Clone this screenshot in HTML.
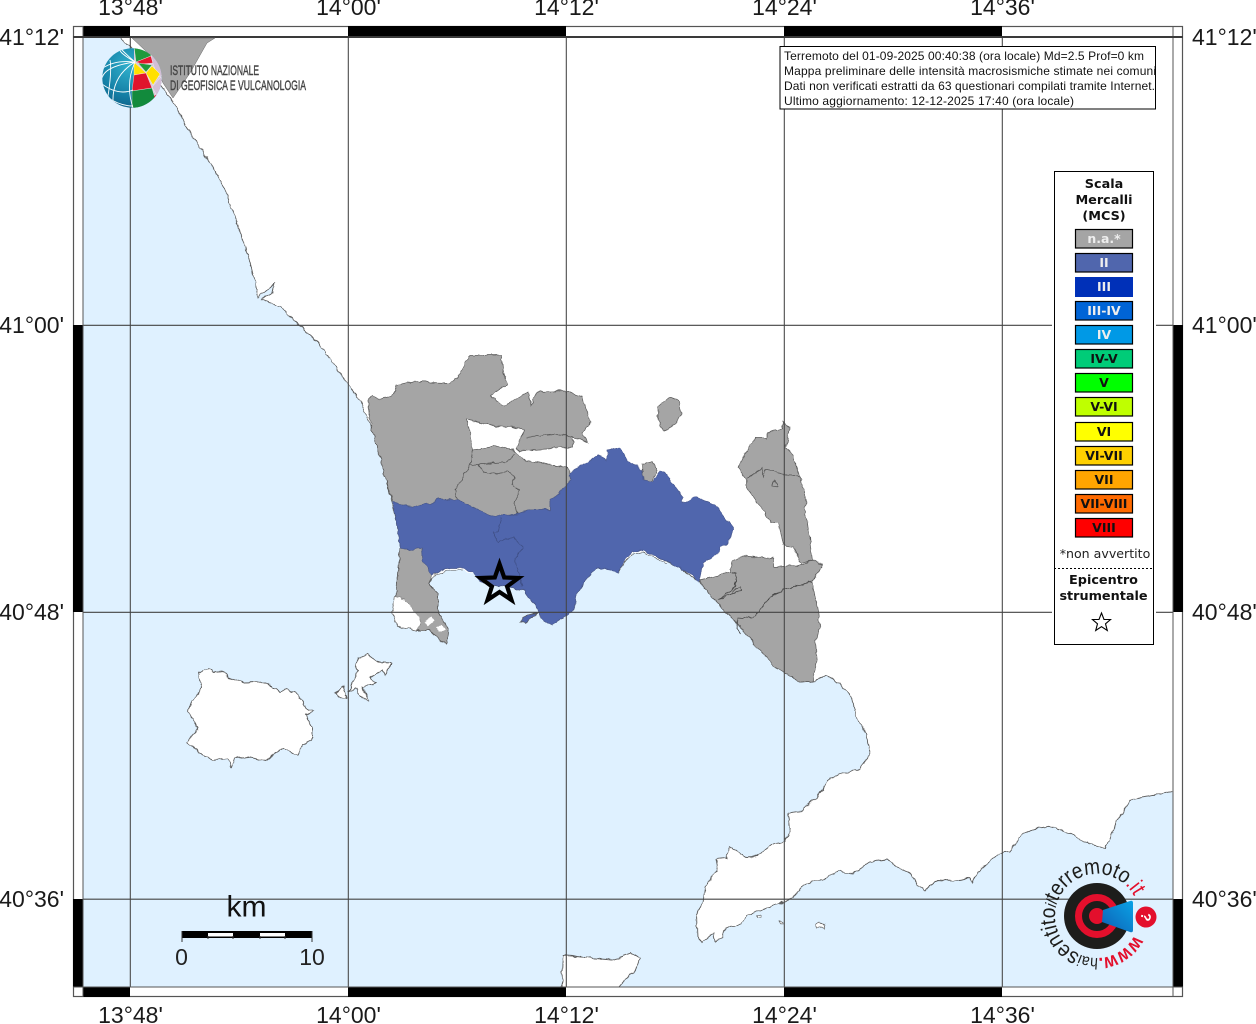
<!DOCTYPE html>
<html lang="it">
<head>
<meta charset="utf-8">
<title>Mappa intensità macrosismiche</title>
<style>
html,body{margin:0;padding:0;background:#fff;width:1256px;height:1024px;overflow:hidden}
svg{display:block}
.fr{font-family:"Liberation Sans",sans-serif;font-size:23px;fill:#1a1a1a}
.leg{font-family:"DejaVu Sans",sans-serif;font-weight:bold;font-size:12.5px;text-anchor:middle}
.tit{font-family:"DejaVu Sans",sans-serif;font-weight:bold;font-size:12.8px;text-anchor:middle;fill:#111}
.info{font-family:"Liberation Sans",sans-serif;font-size:12px;fill:#111}
</style>
</head>
<body>
<svg width="1256" height="1024" viewBox="0 0 1256 1024" xmlns="http://www.w3.org/2000/svg">
<defs>
<clipPath id="mapc"><rect x="83" y="37" width="1090" height="950"/></clipPath>
<clipPath id="infoc"><rect x="780" y="46" width="375.5" height="63"/></clipPath>
<clipPath id="gl"><circle cx="132" cy="78" r="29.7"/></clipPath>
<radialGradient id="gb" cx="0.45" cy="0.3" r="0.8"><stop offset="0" stop-color="#30b0cc"/><stop offset="0.6" stop-color="#1580a6"/><stop offset="1" stop-color="#0d5a82"/></radialGradient>
<linearGradient id="cone" x1="0" y1="1" x2="1" y2="0"><stop offset="0" stop-color="#0d5fb4"/><stop offset="1" stop-color="#0aa3e6"/></linearGradient>
<filter id="wig" filterUnits="userSpaceOnUse" x="60" y="20" width="1140" height="990" color-interpolation-filters="sRGB">
<feTurbulence type="fractalNoise" baseFrequency="0.14" numOctaves="2" seed="4" result="n"/>
<feDisplacementMap in="SourceGraphic" in2="n" scale="4.5" xChannelSelector="R" yChannelSelector="G"/>
</filter>
</defs>

<rect width="1256" height="1024" fill="#fff"/>

<g clip-path="url(#mapc)">
<g filter="url(#wig)">
<!-- sea -->
<path fill="#dff1ff" stroke="#5a5a5a" stroke-width="0.9" d="M70 25L110 25L120 37L150 70L165 90L175 105L188 130L200 148L212 165L225 190L238 225L250 262L256 287L258 297L270 288L274 284L272 293L262 299L280 307L300 325L320 345L345 380L360 400L372 430L385 475L392 502L397 523L400 548L397 590L395 597L392 613L397 627L418 630L430 630L440 640L447 645L448 630L443 620L438 613L438 593L428 583L437 572L450 568L463 568L473 573L480 582L493 585L513 588L523 590L528 597L535 603L540 617L552 625L567 615L573 610L577 593L587 578L597 568L607 568L618 572L627 560L633 552L643 550L667 562L680 568L700 582L717 603L737 623L773 665L800 682L813 681L827 675L840 685L852 697L855 714L866 733L870 755L858 770L838 775L827 780L818 797L808 803L803 811L787 813L790 830L785 841L772 845L758 856L747 857L730 847L726 858L716 859L718 870L705 887L703 902L697 915L698 937L702 943L713 933L715 941L723 938L725 928L742 923L747 916L783 902L793 897L805 884L823 879L840 871L852 874L870 862L887 860L912 875L917 885L925 890L937 880L953 881L970 878L973 882L977 873L1000 853L1010 852L1023 833L1030 830L1050 826L1068 832L1085 842L1106 848L1117 822L1130 800L1155 795L1190 788L1190 1000L70 1000Z"/>
<!-- Ischia -->
<path fill="#fff" stroke="#5a5a5a" stroke-width="0.9" d="M198 673L208 668L213 672L223 671L228 678L245 683L265 682L280 692L287 689L298 695L305 707L313 711L305 715L312 727L312 740L302 745L298 755L283 748L265 761L248 757L235 758L232 768L228 758L212 760L200 753L187 742L198 728L188 710L192 702L203 687L198 677Z"/>
<!-- Procida -->
<path fill="#fff" stroke="#5a5a5a" stroke-width="0.9" d="M335 693L343 686L347 698L339 697Z"/>
<path fill="#fff" stroke="#5a5a5a" stroke-width="0.9" d="M358 658L368 655L378 662L392 663L385 675L382 670L370 678L377 683L368 685L362 688L368 700L362 698L355 688L349 691L358 670L355 665Z"/>
<!-- Capri -->
<path fill="#fff" stroke="#5a5a5a" stroke-width="0.9" d="M563 955L590 958L612 960L632 953L640 958L636 970L625 980L612 995L563 995L562 972Z"/>
<!-- small islets -->
<path fill="#fff" stroke="#5a5a5a" stroke-width="0.7" d="M756 916L761 914L761 917L757 918Z M779 921L783 923L783 925L780 924Z M816 926L820 922L824 924L825 928L821 927L817 929Z"/>

<!-- grey north -->
<path fill="#a5a5a5" stroke="#5a5a5a" stroke-width="0.7" d="M367 400L373 396L378 399L388 397L395 392L397 385L410 382L448 383L457 378L470 355L502 355L503 370L508 385L502 387L490 397L505 405L528 392L530 405L537 392L568 391L582 397L591 422L582 433L588 443L573 437L573 447L520 451L516 448L520 438L525 429L495 426L467 419L473 450L497 446L515 450L523 460L567 467L571 473L570 483L560 492L550 500L550 510L530 510L513 515L490 516L483 512L457 500L438 499L430 503L413 507L393 502L385 475L372 430Z"/>
<path fill="none" stroke="#555" stroke-width="0.8" d="M473 450L470 465L455 490L458 500M470 465L507 462L515 454M478 465L483 472L497 475L507 471L515 478L512 485L520 490L515 503L517 515M525 437L560 434L573 437"/>
<!-- grey small -->
<path fill="#a5a5a5" stroke="#5a5a5a" stroke-width="0.7" d="M658 407L670 397L678 400L682 413L675 425L663 431L658 420Z"/>
<path fill="#a5a5a5" stroke="#5a5a5a" stroke-width="0.7" d="M642 464L653 461L657 470L652 482L643 480Z"/>
<!-- grey east -->
<path fill="#a5a5a5" stroke="#5a5a5a" stroke-width="0.7" d="M783 422L789 427L788 440L785 447L793 455L800 477L807 503L803 508L807 520L813 560L802 564L793 547L783 545L778 523L772 523L747 488L747 480L738 468L743 457L755 438L768 438L768 432L782 430Z"/>
<path fill="none" stroke="#555" stroke-width="0.8" d="M747 478L762 468L763 478L765 470L770 470L785 475L800 476M772 486L775 480L778 487Z"/>
<!-- grey south-east -->
<path fill="#a5a5a5" stroke="#5a5a5a" stroke-width="0.7" d="M699 580L713 577L730 572L732 562L743 556L772 558L775 567L803 565L813 560L823 565L812 582L818 610L820 628L815 643L817 663L813 681L800 682L773 665L737 623L717 603Z"/>
<path fill="none" stroke="#444" stroke-width="0.8" d="M730 572L737 573L735 587L718 600L733 593M812 582L783 590L770 598L757 613L752 618L738 617L737 628L740 633M733 591L740 587L741 591L733 593Z"/>

<!-- grey Cuma -->
<path fill="#a5a5a5" stroke="#5a5a5a" stroke-width="0.7" d="M400 548L413 550L422 548L423 562L432 575L428 583L438 593L438 613L443 620L448 630L447 645L440 640L430 630L418 630L397 627L392 613L395 597L397 590Z"/>
<path fill="#fff" stroke="#777" stroke-width="0.5" d="M395 597L392 613L397 627L418 630L421 622L411 606L404 599Z"/>
<path fill="#fff" d="M425 622L432 618L434 621L428 626Z M436 627L442 626L445 631L438 631Z"/>

<!-- blue -->
<path fill="#5066ad" stroke="#4a5a90" stroke-width="0.7" d="M393 502L413 507L430 503L438 499L457 500L483 512L490 516L513 515L530 510L550 510L550 500L560 492L570 483L571 473L598 455L607 460L607 450L620 447L627 460L635 465L642 470L643 480L653 482L660 470L665 473L683 497L683 503L695 496L715 505L733 528L728 543L720 547L718 553L703 563L700 577L698 582L693 575L670 563L643 550L633 552L625 560L618 572L600 568L597 568L587 578L577 593L573 610L567 615L552 625L540 617L535 603L528 597L523 590L513 588L493 585L480 582L473 573L463 568L450 568L437 572L432 575L423 562L422 548L413 550L400 548L397 523Z"/>
<path fill="none" stroke="#3f4f86" stroke-width="0.8" d="M502 517L498 532L493 532L498 542L513 537L523 548L515 558L522 587"/>
<path fill="#5066ad" stroke="#555" stroke-width="0.8" d="M522 617L528 615L537 613L531 619L525 623L521 622Z"/>
<!-- gulf coast white fringe -->
<path fill="none" stroke="#fff" stroke-width="1.2" d="M431 578L438 573L450 569L463 569L472 574M625 561L633 553L643 551L667 563"/>
<path fill="none" stroke="#555" stroke-width="0.6" d="M430 581L437 574L450 570L463 570M624 563L632 555L643 552L667 564"/>
</g>

<!-- graticule -->
<g stroke="#444" stroke-width="1.05" fill="none">
<path d="M130.3 37V987M348.3 37V987M566.3 37V987M784.3 37V987M1002.3 37V987"/>
<path d="M83 325.3H1173M83 612.3H1173M83 899.2H1173"/>
</g>
</g>

<!-- frame -->
<g>
<rect x="73.5" y="26.5" width="1109" height="970" fill="none" stroke="#555" stroke-width="1.2"/>
<rect x="83" y="26" width="47" height="11" fill="#000"/>
<rect x="348" y="26" width="218" height="11" fill="#000"/>
<rect x="784" y="26" width="218" height="11" fill="#000"/>
<rect x="83" y="987" width="47" height="10" fill="#000"/>
<rect x="348" y="987" width="218" height="10" fill="#000"/>
<rect x="784" y="987" width="218" height="10" fill="#000"/>
<rect x="73" y="325" width="10" height="287" fill="#000"/>
<rect x="73" y="899" width="10" height="88" fill="#000"/>
<rect x="1173" y="325" width="10" height="287" fill="#000"/>
<rect x="1173" y="899" width="10" height="88" fill="#000"/>
<path d="M83 26V997M1173 26V997M73 987H1183" stroke="#555" stroke-width="1" fill="none"/>
<path d="M73 37H1183" stroke="#3a3a3a" stroke-width="2" fill="none"/>
</g>

<!-- frame labels -->
<g class="fr" text-anchor="middle">
<text x="130.5" y="15">13°48'</text><text x="348.5" y="15">14°00'</text><text x="566.5" y="15">14°12'</text><text x="784.5" y="15">14°24'</text><text x="1002.5" y="15">14°36'</text>
<text x="130.5" y="1023">13°48'</text><text x="348.5" y="1023">14°00'</text><text x="566.5" y="1023">14°12'</text><text x="784.5" y="1023">14°24'</text><text x="1002.5" y="1023">14°36'</text>
</g>
<g class="fr" text-anchor="end">
<text x="64" y="45">41°12'</text><text x="64" y="333">41°00'</text><text x="64" y="620">40°48'</text><text x="64" y="907">40°36'</text>
</g>
<g class="fr">
<text x="1192" y="45">41°12'</text><text x="1192" y="333">41°00'</text><text x="1192" y="620">40°48'</text><text x="1192" y="907">40°36'</text>
</g>

<!-- grey wedge top-left -->
<path fill="#a5a5a5" stroke="#666" stroke-width="0.5" d="M132 38L215 38L207 43L203 50L190 73L173 98L163 83L150 55Z"/>

<!-- INGV logo -->
<g>
<circle cx="132" cy="78" r="29.7" fill="url(#gb)"/>
<g clip-path="url(#gl)" stroke="#fff" stroke-width="0.35">
<rect x="134" y="46" width="30" height="64" fill="#d8c8dc" stroke="none"/>
<path fill="#1f9a3c" d="M134 46L149 46L151 56L136 62Z"/>
<path fill="#e4172f" d="M136 62L151 56L153 63L142 64Z"/>
<path fill="#d2bfd6" d="M151 55L160 63L163 75L158 77L153 64Z"/>
<path fill="#1f9a3c" d="M138 63L152 65L146 72Z"/>
<path fill="#ffe000" d="M134 62L146 73L134 75Z"/>
<path fill="#ffe000" d="M152 66L160 74L153 85L146 73Z"/>
<path fill="#e0142c" d="M134 75L146 73L152 88L132 91Z"/>
<path fill="#d2bfd6" d="M161 77L163 85L157 96L152 87Z"/>
<path fill="#128a3c" d="M132 91L152 88L155 98L142 110L132 110Z"/>
<path fill="#e4172f" d="M154 96L158 94L155 99Z" stroke="none"/>
<g stroke-width="0.9" fill="none">
<path d="M135 62Q118 52 120 49M135 62Q105 66 102 78M135 62Q112 76 113 102M135 62Q125 84 133 108M103 68Q115 60 133 62M102 84Q118 96 133 90M107 97Q120 106 133 106M110 60Q112 70 108 96M122 50Q128 56 135 62"/>
</g>
</g>
<text x="170" y="75" font-family="'Liberation Sans',sans-serif" font-size="14" fill="#444" stroke="#444" stroke-width="0.4" textLength="89" lengthAdjust="spacingAndGlyphs">ISTITUTO NAZIONALE</text>
<text x="170" y="90" font-family="'Liberation Sans',sans-serif" font-size="14" fill="#444" stroke="#444" stroke-width="0.4" textLength="136" lengthAdjust="spacingAndGlyphs">DI GEOFISICA E VULCANOLOGIA</text>
</g>

<!-- info box -->
<rect x="780" y="46.5" width="375.5" height="62.5" fill="#fff" stroke="#000" stroke-width="1"/>
<g class="info" clip-path="url(#infoc)">
<text x="784" y="60" textLength="360">Terremoto del 01-09-2025 00:40:38 (ora locale) Md=2.5 Prof=0 km</text>
<text x="784" y="75" textLength="372">Mappa preliminare delle intensità macrosismiche stimate nei comuni</text>
<text x="784" y="90" textLength="371">Dati non verificati estratti da 63 questionari compilati tramite Internet.</text>
<text x="784" y="105" textLength="290">Ultimo aggiornamento: 12-12-2025 17:40 (ora locale)</text>
</g>

<!-- legend -->
<rect x="1052" y="169" width="104" height="478" fill="#fff"/>
<rect x="1054.5" y="171.5" width="99" height="473" fill="#fff" stroke="#000" stroke-width="1"/>
<text class="tit" x="1104" y="188">Scala</text>
<text class="tit" x="1104" y="204">Mercalli</text>
<text class="tit" x="1104" y="220">(MCS)</text>
<g stroke="#000" stroke-width="1.2">
<rect x="1075.5" y="229.5" width="57" height="18.5" fill="#a5a5a5"/>
<rect x="1075.5" y="253.5" width="57" height="18.5" fill="#5066ad"/>
<rect x="1075" y="277" width="58" height="20" fill="#0030b8" stroke="none"/>
<rect x="1075.5" y="301.5" width="57" height="18.5" fill="#0064d6"/>
<rect x="1075.5" y="325.5" width="57" height="18.5" fill="#0099e6"/>
<rect x="1075.5" y="349.5" width="57" height="18.5" fill="#00cc78"/>
<rect x="1075.5" y="373.5" width="57" height="18.5" fill="#00ff00"/>
<rect x="1075.5" y="397.5" width="57" height="18.5" fill="#bfff00"/>
<rect x="1075.5" y="422.5" width="57" height="18.5" fill="#ffff00"/>
<rect x="1075.5" y="446.5" width="57" height="18.5" fill="#ffd000"/>
<rect x="1075.5" y="470.5" width="57" height="18.5" fill="#ffa500"/>
<rect x="1075.5" y="494.5" width="57" height="18.5" fill="#ff6a00"/>
<rect x="1075.5" y="518.5" width="57" height="18.5" fill="#ff0000"/>
</g>
<g class="leg">
<text x="1104" y="243" fill="#eee">n.a.*</text>
<text x="1104" y="267" fill="#eee">II</text>
<text x="1104" y="291" fill="#eee">III</text>
<text x="1104" y="315" fill="#eee">III-IV</text>
<text x="1104" y="339" fill="#eee">IV</text>
<text x="1104" y="363" fill="#111">IV-V</text>
<text x="1104" y="387" fill="#111">V</text>
<text x="1104" y="411" fill="#111">V-VI</text>
<text x="1104" y="436" fill="#111">VI</text>
<text x="1104" y="460" fill="#111">VI-VII</text>
<text x="1104" y="484" fill="#111">VII</text>
<text x="1104" y="508" fill="#111">VII-VIII</text>
<text x="1104" y="532" fill="#111">VIII</text>
</g>
<text x="1105" y="558" font-family="'DejaVu Sans',sans-serif" font-size="12.6" fill="#222" text-anchor="middle">*non avvertito</text>
<path d="M1054 568.5H1152" stroke="#000" stroke-width="1" stroke-dasharray="2 2"/>
<text class="tit" x="1103.5" y="584">Epicentro</text>
<text class="tit" x="1103.5" y="600">strumentale</text>
<path d="M1101.5 613L1104 619.5L1110.5 619.5L1105.5 623.8L1107.3 630.5L1101.5 626.7L1095.7 630.5L1097.5 623.8L1092.5 619.5L1099 619.5Z" fill="#fff" stroke="#000" stroke-width="1.1"/>

<!-- epicentre star -->
<path d="M499.5 564L504.2 577.5L518.5 578L507.1 586.5L511.5 600L499.5 592L487.5 600L491.9 586.5L480.5 578L494.8 577.5Z" fill="none" stroke="#000" stroke-width="4.2" stroke-miterlimit="6"/>

<!-- scale bar -->
<g>
<rect x="182" y="931" width="130" height="7" fill="#000"/>
<rect x="208" y="933" width="25" height="3.5" fill="#fff"/>
<rect x="260" y="933" width="25" height="3.5" fill="#fff"/>
<path d="M182 931V942M312 931V942M208 936V939M233 936V939M260 936V939M285 936V939" stroke="#333" stroke-width="1" fill="none"/>
<text x="246.5" y="916.5" font-family="'Liberation Sans',sans-serif" font-size="30" text-anchor="middle" fill="#111">km</text>
<text x="181.5" y="965" font-family="'Liberation Sans',sans-serif" font-size="23" text-anchor="middle" fill="#222">0</text>
<text x="312" y="965" font-family="'Liberation Sans',sans-serif" font-size="23" text-anchor="middle" fill="#222">10</text>
</g>

<!-- haisentito logo -->
<g>
<circle cx="1097" cy="916" r="33" fill="#1d1d1b"/>
<circle cx="1097" cy="916" r="18.5" fill="none" stroke="#e30f2c" stroke-width="7"/>
<circle cx="1097" cy="916" r="8" fill="#e30f2c"/>
<path d="M1103 910L1130 901Q1133 900 1133 903L1133 930Q1133 933 1130 932L1102 922Z" fill="url(#cone)"/>
<circle cx="1146" cy="917" r="10.5" fill="#e30f2c"/>
<text x="1146" y="922" transform="rotate(100 1146 917)" font-family="'Liberation Sans',sans-serif" font-weight="bold" font-size="14" fill="#fff" text-anchor="middle">?</text>
<path id="ring" d="M1134.4 935.1A42 42 0 1 1 1134.1 896.3" fill="none"/>
<text font-family="'Liberation Sans',sans-serif" font-size="22" fill="#1d1d1b" textLength="223" lengthAdjust="spacingAndGlyphs">
<textPath href="#ring"><tspan fill="#e30f2c" font-weight="bold" font-size="20">www.</tspan><tspan font-size="16">hai</tspan>sentito<tspan font-style="italic" font-size="16">il</tspan>terremoto<tspan fill="#e30f2c">.it</tspan></textPath>
</text>
</g>
</svg>
</body>
</html>
